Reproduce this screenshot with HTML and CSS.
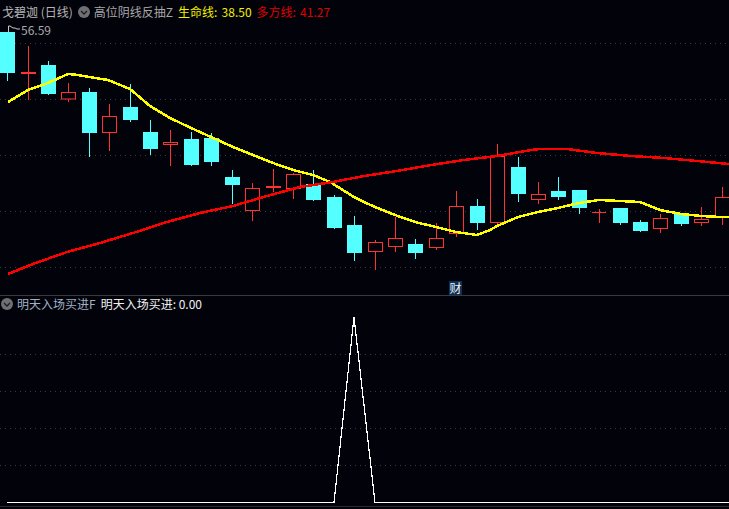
FILE: index.html
```html
<!DOCTYPE html>
<html lang="zh">
<head>
<meta charset="utf-8">
<title>戈碧迦 (日线)</title>
<link rel="stylesheet" href="styles.css">
</head>
<body>
<main class="terminal">
  <section class="panel panel-main">
    <svg class="chart" width="729" height="295" viewBox="0 0 729 295">
      <g class="grid">
        <path d="M0 43.5H729M0 99.5H729M0 155.5H729M0 211.5H729M0 267.5H729"/>
      </g>
      <g class="wick-down">
        <path d="M7.5 73V81M48.5 61V95M89.5 88V157M130.5 84V122M150.5 120V155M191.5 132V166M211.5 133V166M232.5 170V204M313.5 170V201M334.5 195V229M354.5 216V261M415.5 239V259M477.5 199V230M518.5 157V202M558.5 177V200M579.5 190V214M620.5 208V225M640.5 220V232M681.5 213V226"/>
      </g>
      <g class="body-down">
        <rect x="0" y="32" width="15" height="41"/>
        <rect x="41" y="65" width="15" height="29"/>
        <rect x="82" y="92" width="15" height="41"/>
        <rect x="123" y="107" width="15" height="13"/>
        <rect x="143" y="132" width="15" height="17"/>
        <rect x="184" y="139" width="15" height="26"/>
        <rect x="204" y="138" width="15" height="24"/>
        <rect x="225" y="177" width="15" height="8"/>
        <rect x="306" y="184" width="15" height="16"/>
        <rect x="327" y="197" width="15" height="31"/>
        <rect x="347" y="225" width="15" height="28"/>
        <rect x="408" y="244" width="15" height="9"/>
        <rect x="470" y="206" width="15" height="17"/>
        <rect x="511" y="167" width="15" height="27"/>
        <rect x="551" y="191" width="15" height="6"/>
        <rect x="572" y="190" width="15" height="18"/>
        <rect x="613" y="208" width="15" height="15"/>
        <rect x="633" y="222" width="15" height="9"/>
        <rect x="674" y="213" width="15" height="11"/>
      </g>
      <g class="wick-up">
        <path d="M28.5 46V100M68.5 83V92M68.5 99V102M109.5 104V116M109.5 133V151M170.5 130V166M252.5 183V188M252.5 211V221M273.5 169V192M293.5 173V174M293.5 189V199M375.5 240V242M375.5 252V270M395.5 217V238M395.5 247V252M436.5 223V238M436.5 247V250M456.5 191V206M456.5 233V237M497.5 144V156M497.5 222V225M538.5 182V194M538.5 200V204M599.5 209V223M660.5 214V218M660.5 228V233M701.5 207V219M701.5 222V226M722.5 187V197M722.5 216V225"/>
      </g>
      <g class="body-up">
        <rect x="61.5" y="92.5" width="14" height="6.5"/>
        <rect x="102.5" y="116.5" width="14" height="16"/>
        <rect x="163.5" y="142.5" width="14" height="2"/>
        <rect x="245.5" y="188.5" width="14" height="22"/>
        <rect x="286.5" y="174.5" width="14" height="14"/>
        <rect x="368.5" y="242.5" width="14" height="9"/>
        <rect x="388.5" y="238.5" width="14" height="8"/>
        <rect x="429.5" y="238.5" width="14" height="9"/>
        <rect x="449.5" y="206.5" width="14" height="27"/>
        <rect x="490.5" y="156.5" width="14" height="66"/>
        <rect x="531.5" y="194.5" width="14" height="5"/>
        <rect x="653.5" y="218.5" width="14" height="10"/>
        <rect x="694.5" y="219.5" width="14" height="3"/>
        <rect x="715.5" y="197.5" width="14" height="19"/>
      </g>
      <g class="doji">
        <rect x="21" y="72" width="15" height="2"/>
        <rect x="266" y="186" width="15" height="2"/>
        <rect x="592" y="212" width="14" height="1"/>
      </g>
      <polyline class="line-life" points="8,102 28,90 48,83 68,74 78,75 89,77 108,80 130,89 150,106 170,118 191,128 211,137 233,147 253,155 273,163 293,170 313,175 330,182 354,197 364,202 375,207 395,215 415,222 436,227 456,232 477,235 490,230 497,226 518,217 538,212 558,208 579,203 599,200 620,201 640,202 660,210 681,214 701,216 721,217 729,217"/>
      <polyline class="line-bull" points="8,274 33,264 67,252 100,243 133,233 167,222 200,213 233,206 267,196 300,187 333,182 364,176 397,171 431,165 464,160 497,156 531,150 541,149 567,149 597,153 631,156 664,158 697,161 729,164"/>
    </svg>
    <header class="legend">
      <span class="stock">戈碧迦 (日线)</span>
      <span class="toggle"><svg width="12" height="12" viewBox="0 0 12 12"><path d="M3 5l3 3 3-3"/></svg></span>
      <span class="muted">高位阴线反抽Z</span>
      <span class="yellow">生命线: 38.50</span>
      <span class="red">多方线: 41.27</span>
    </header>
    <div class="high-mark">
      <svg width="13" height="8" viewBox="0 0 13 8"><path d="M1.500 8V1H3L6 3H8L10 4H13"/></svg>
      <span>56.59</span>
    </div>
    <span class="cai">财</span>
  </section>
  <section class="panel panel-sub">
    <svg class="chart" width="729" height="213" viewBox="0 0 729 213">
      <g class="grid">
        <path d="M0 58.500H729M0 95.500H729M0 132.500H729M0 169.500H729"/>
      </g>
      <polyline class="line-signal" points="7,206.500 334,206.500 354,21 375,206.500 729,206.500"/>
      <path class="baseline" d="M0 210.500H729"/>
    </svg>
    <header class="legend legend-sub">
      <span class="toggle"><svg width="12" height="12" viewBox="0 0 12 12"><path d="M3 5l3 3 3-3"/></svg></span>
      <span class="muted-blue">明天入场买进F</span>
      <span class="white">明天入场买进: 0.00</span>
    </header>
  </section>
</main>
</body>
</html>
```
FILE: styles.css
```css
html, body {
  margin: 0;
  padding: 0;
  background: #02020a;
}
.terminal {
  width: 729px;
  height: 509px;
  display: flex;
  flex-direction: column;
  overflow: hidden;
  font-family: "Noto Sans CJK SC", "Liberation Sans", sans-serif;
  font-size: 12px;
  line-height: 16px;
}
.panel {
  position: relative;
}
.panel-main {
  height: 295px;
}
.panel-sub {
  height: 213px;
  border-top: 1px solid #3a3a3e;
}
.chart {
  display: block;
}
.grid path {
  fill: none;
  stroke: #3c3c40;
  stroke-width: 1;
  stroke-dasharray: 1 4;
}
.wick-down path {
  stroke: #54ffff;
  stroke-width: 1;
  fill: none;
}
.wick-up path {
  stroke: #ff3232;
  stroke-width: 1;
  fill: none;
}
.body-down rect {
  fill: #54ffff;
}
.body-up rect {
  fill: #02020a;
  stroke: #ff3232;
  stroke-width: 1;
}
.doji rect {
  fill: #ff3232;
}
.line-life, .line-bull {
  fill: none;
  stroke-width: 2.500;
  shape-rendering: crispEdges;
}
.line-life {
  stroke: #ffff00;
}
.line-bull {
  stroke: #ff0000;
}
.line-signal {
  fill: none;
  stroke: #ffffff;
  stroke-width: 1.200;
  shape-rendering: crispEdges;
}
.baseline {
  stroke: #2a2a2e;
  stroke-width: 1;
}
.legend {
  position: absolute;
  top: 4px;
  left: 2px;
  display: flex;
  align-items: center;
  white-space: nowrap;
}
.legend-sub {
  top: 0;
  left: 1px;
}
.stock {
  color: #b4b4b4;
  margin-right: 5px;
}
.toggle {
  width: 12px;
  height: 12px;
  border-radius: 50%;
  background: #707074;
  margin-right: 4px;
  display: block;
}
.toggle svg {
  display: block;
}
.toggle path {
  fill: none;
  stroke: #1c1c20;
  stroke-width: 1.300;
}
.muted {
  color: #a8a8a8;
  margin-right: 5px;
}
.muted-blue {
  color: #a0b0c4;
  margin-right: 5px;
}
.white {
  color: #f0f0f0;
}
.yellow {
  color: #f0f000;
  margin-right: 5px;
  word-spacing: 1.500px;
}
.red {
  color: #e00000;
  word-spacing: 1.500px;
}
.high-mark {
  position: absolute;
  top: 22px;
  left: 7px;
  display: flex;
  align-items: flex-start;
  gap: 1px;
  color: #a8a8a8;
}
.high-mark svg {
  margin-top: 3px;
  display: block;
}
.high-mark path {
  fill: none;
  stroke: #c8c8c8;
  stroke-width: 1;
}
.cai {
  position: absolute;
  top: 281px;
  left: 449px;
  width: 13px;
  height: 14px;
  background: #0a3058;
  color: #f0f0f0;
  text-align: center;
  line-height: 14px;
}
```
